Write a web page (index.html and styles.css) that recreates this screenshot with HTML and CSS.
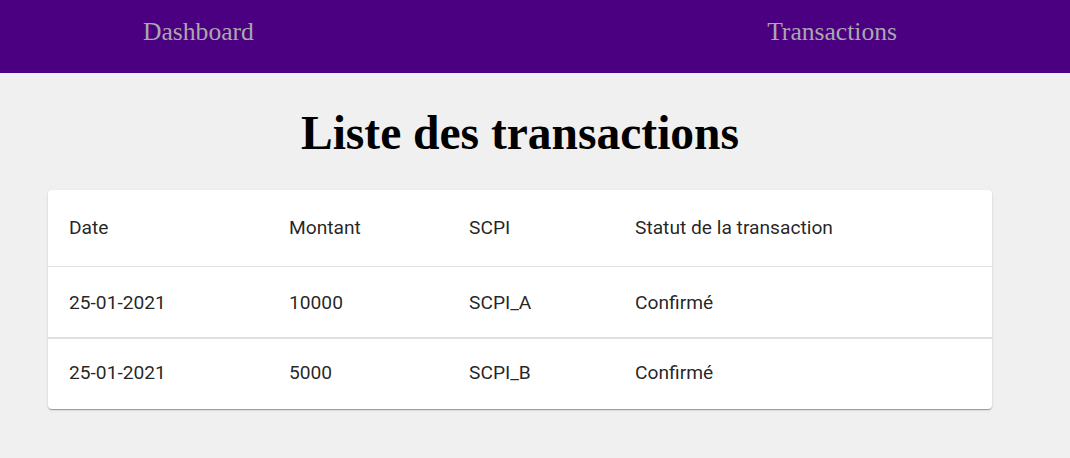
FILE: index.html
```html
<!DOCTYPE html>
<html lang="fr">
<head>
<meta charset="utf-8">
<title>Transactions</title>
<link rel="stylesheet" href="styles.css">
</head>
<body>
<nav class="navbar">
  <a class="nav-link" href="#">Dashboard</a>
  <a class="nav-link" href="#">Transactions</a>
</nav>
<main class="content">
  <h1 class="title">Liste des transactions</h1>
  <div class="card">
    <table class="table">
      <colgroup>
        <col class="c1"><col class="c2"><col class="c3"><col class="c4">
      </colgroup>
      <thead>
        <tr><th>Date</th><th>Montant</th><th>SCPI</th><th>Statut de la transaction</th></tr>
      </thead>
      <tbody>
        <tr class="row-first"><td>25-01-2021</td><td>10000</td><td>SCPI_A</td><td>Confirmé</td></tr>
        <tr class="row-last"><td>25-01-2021</td><td>5000</td><td>SCPI_B</td><td>Confirmé</td></tr>
      </tbody>
    </table>
  </div>
</main>
</body>
</html>
```
FILE: styles.css
```css
html, body {
  margin: 0;
  padding: 0;
  background: #f0f0f0;
}
body {
  font-family: "Liberation Serif", "Times New Roman", serif;
}
.navbar {
  height: 73px;
  background: #4b0082;
  display: flex;
  align-items: center;
  justify-content: space-between;
  padding: 0 173px 0 143px;
}
.nav-link {
  color: #a9a9a9;
  text-decoration: none;
  font-size: 25.6px;
  line-height: 30px;
  margin-top: -9px;
}
.content {
  width: 944px;
  margin: 0 0 0 48px;
  padding-bottom: 40px;
}
.title {
  margin: 0;
  padding: 33px 0 30px;
  text-align: center;
  font-size: 47.5px;
  line-height: 54px;
  font-weight: bold;
  color: #000;
}
.card {
  background: #fff;
  border-radius: 4px;
  box-shadow: 0 2px 1px -1px rgba(0,0,0,0.2), 0 1px 1px 0 rgba(0,0,0,0.14), 0 1px 3px 0 rgba(0,0,0,0.12);
  overflow: hidden;
}
.table {
  width: 100%;
  border-collapse: collapse;
  table-layout: fixed;
  font-family: Roboto, "Liberation Sans", sans-serif;
  font-size: 19.2px;
  color: rgba(0,0,0,0.87);
}
.c1 { width: 220px; }
.c2 { width: 180px; }
.c3 { width: 166px; }
.c4 { width: auto; }
.table th, .table td {
  text-align: left;
  font-weight: 400;
  line-height: 27px;
  padding: 0 21px;
}
.table th {
  height: 74px;
  padding-bottom: 2px;
  border-bottom: 1px solid #e0e0e0;
}
.table td {
  height: 70px;
}
.row-first td {
  height: 69px;
  padding-top: 1px;
  border-bottom: 2px solid #e0e0e0;
}
.row-last td {
  height: 67px;
  padding-bottom: 3px;
}
```
